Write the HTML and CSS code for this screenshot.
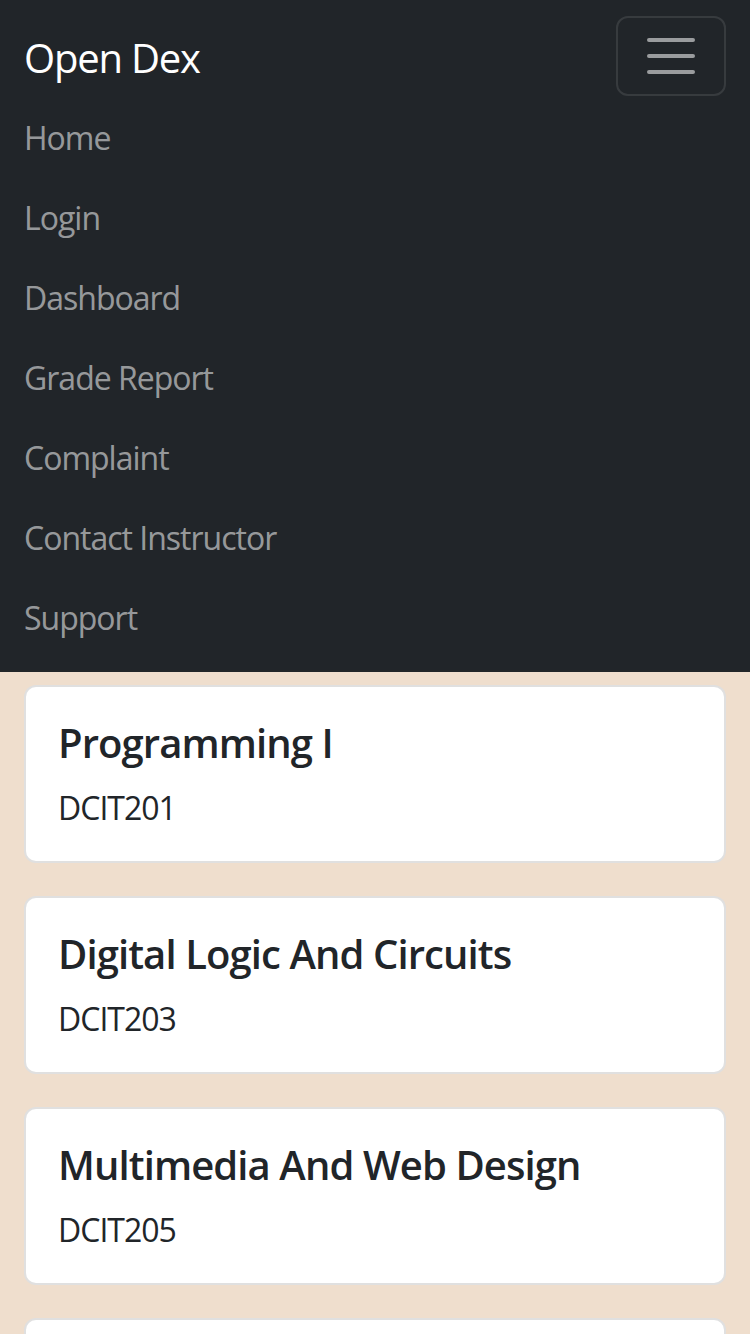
FILE: index.html
```html
<!DOCTYPE html>
<html lang="en">
<head>
<meta charset="utf-8">
<title>Open Dex</title>
<link rel="stylesheet" href="styles.css">
</head>
<body>
<nav class="navbar">
  <div class="navbar-top">
    <a class="brand" href="#">Open Dex</a>
    <button class="toggler" type="button" aria-label="Toggle navigation">
      <svg class="toggler-icon" viewBox="0 0 30 30" width="60" height="60" aria-hidden="true">
        <path d="M4 7h22M4 15h22M4 23h22" stroke="rgba(255,255,255,0.55)" stroke-width="2" stroke-linecap="round" stroke-miterlimit="10" fill="none"/>
      </svg>
    </button>
  </div>
  <ul class="nav-list">
    <li><a class="nav-link" href="#">Home</a></li>
    <li><a class="nav-link" href="#">Login</a></li>
    <li><a class="nav-link" href="#">Dashboard</a></li>
    <li><a class="nav-link" href="#">Grade Report</a></li>
    <li><a class="nav-link" href="#">Complaint</a></li>
    <li><a class="nav-link" href="#">Contact Instructor</a></li>
    <li><a class="nav-link" href="#">Support</a></li>
  </ul>
</nav>
<main class="courses">
  <div class="card">
    <h5 class="card-title">Programming I</h5>
    <p class="card-text">DCIT201</p>
  </div>
  <div class="card">
    <h5 class="card-title">Digital Logic And Circuits</h5>
    <p class="card-text">DCIT203</p>
  </div>
  <div class="card">
    <h5 class="card-title">Multimedia And Web Design</h5>
    <p class="card-text">DCIT205</p>
  </div>
  <div class="card"></div>
</main>
</body>
</html>
```

FILE: styles.css
```css
* {
  box-sizing: border-box;
}

html, body {
  margin: 0;
  padding: 0;
}

body {
  background: #efdecd;
  font-family: "Open Sans", "Noto Sans", "Liberation Sans", sans-serif;
  color: #212529;
}

.navbar {
  background: #212529;
  padding: 16px 24px;
}

.navbar-top {
  display: flex;
  justify-content: space-between;
  align-items: center;
}

.brand {
  display: block;
  padding: 12px 0 8px;
  font-size: 40px;
  line-height: 60px;
  color: #ffffff;
  text-decoration: none;
  letter-spacing: -1.2px;
}

.toggler {
  display: flex;
  align-items: center;
  justify-content: center;
  width: 110px;
  height: 80px;
  padding: 0;
  background: transparent;
  border: 2px solid rgba(255, 255, 255, 0.1);
  border-radius: 12px;
}

.toggler-icon {
  display: block;
}

.nav-list {
  list-style: none;
  margin: 0;
  padding: 0;
  display: flex;
  flex-direction: column;
}

.nav-link {
  display: block;
  padding: 18px 0 14px;
  font-size: 32px;
  line-height: 48px;
  color: rgba(255, 255, 255, 0.55);
  text-decoration: none;
  letter-spacing: -1px;
}

.courses {
  display: flex;
  flex-direction: column;
  gap: 33px;
  padding: 13px 24px 40px;
}

.card {
  background: #ffffff;
  border: 2px solid rgba(0, 0, 0, 0.12);
  border-radius: 12px;
  padding: 32px;
  height: 178px;
}

.card-title {
  margin: 0 0 17px;
  font-size: 40px;
  line-height: 48px;
  font-weight: 600;
  letter-spacing: -0.9px;
}

.card-text {
  margin: 0;
  font-size: 32px;
  line-height: 48px;
  letter-spacing: -1px;
}
```
